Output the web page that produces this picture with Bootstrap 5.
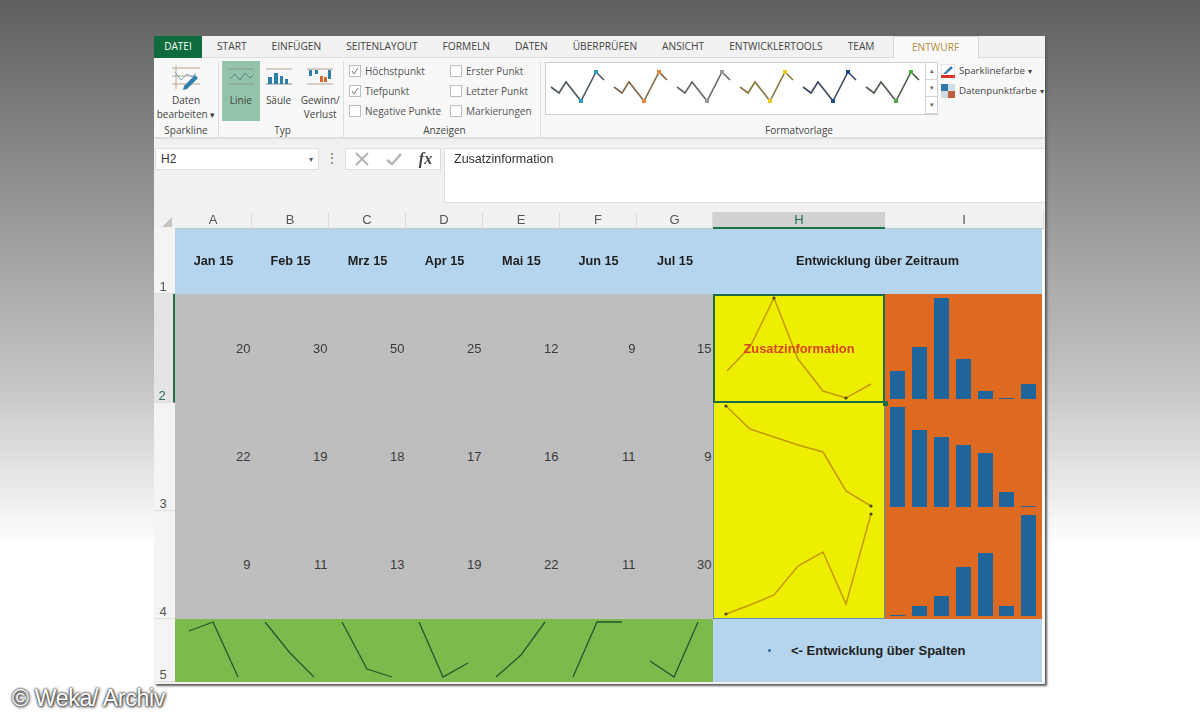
<!DOCTYPE html>
<html lang="de">
<head>
<meta charset="utf-8">
<title>Sparklines</title>
<link href="https://cdn.jsdelivr.net/npm/bootstrap@5.3.0/dist/css/bootstrap.min.css" rel="stylesheet">
<style>
html,body{height:720px;overflow:hidden}
body{background:linear-gradient(180deg,#5f5f5f 0,#8a8a8a 22%,#c2c2c2 52%,#fff 76%,#fff 100%);font-family:"Open Sans","Liberation Sans",sans-serif;padding:36px 0 0 0;color:#444}
.x-win{width:891px;height:648px;margin-left:154px;background:#f1f1f1;box-shadow:2px 2px 2px #5a5a5a;filter:blur(.4px);overflow:hidden}
.x-tabs{height:22px;background:#f1f1f1;font-size:10.2px;color:#444;gap:25px;border-bottom:1px solid #dcdcdc}
.x-file{width:48px;background:#0d6b3e;color:#fff;margin-right:-10px;height:22px;font-size:10px}
.x-tab-on{width:86px;height:23px;margin:0 0 -1px -7px;background:#fafafa;color:#b58a3c;border:1px solid #d8d8d8;border-bottom:0}
.x-ribbon{height:81px;background:#f8f8f8;border-bottom:2px solid #dfdfdf;font-size:10px;line-height:14px}
.x-grp{border-right:1px solid #dcdcdc;margin:3px 0 0;height:76px}
.x-g1{width:65px;flex:none}
.x-g2{width:125px;padding-left:3px;flex:none}
.x-g3{width:197px;padding-left:5px;flex:none}
.x-g4{flex:1;min-width:0;padding-left:4px;border-right:0}
.x-col1{width:101px}
.x-b1{width:38px}
.x-b2{width:46px}
.x-glabel{color:#444;text-align:center;margin-top:auto;height:13px;line-height:13px;white-space:nowrap}
.x-g4 .x-glabel{padding-left:8px}
.x-btn{height:60px;text-align:center;padding-top:3px;white-space:nowrap}
.x-btn svg{display:block;margin:0 auto 2px}
.x-active{background:#93c3aa}
.x-chk{gap:4px;height:20px;white-space:nowrap;color:#555}
.x-box{width:12px;height:12px;background:#fff;border:1px solid #bdbdbd;flex:none}
.x-box svg{display:block}
.x-gallery{width:393px;height:53px;background:#fff;border:1px solid #cfcfcf;margin-top:1px;flex:none}
.x-gal-item{width:63px;flex:none}
.x-scroll{width:12px;margin-left:auto;border-left:1px solid #d5d5d5;font-size:7px;color:#666}
.x-scroll span{height:17px;display:flex;align-items:center;justify-content:center;border-bottom:1px solid #d5d5d5}
.x-tools{white-space:nowrap;gap:6px;margin-left:3px;padding-top:3px;font-size:9.7px}
.x-tools small{font-size:8px;margin-left:-1px}
.x-fbar{height:74px;padding-top:9px;background:#f1f1f1}
.x-name{width:164px;height:22px;margin-left:1px;background:#fff;border:1px solid #dedede;font:12px "Liberation Sans",sans-serif;color:#333;padding:0 5px}
.x-name small{font-size:8px;color:#555}
.x-dots{width:26px;text-align:center;color:#666;font-size:12px;line-height:20px}
.x-fx{width:96px;height:22px;background:#fff;border:1px solid #dedede;color:#444}
.x-fx i{font:italic bold 16px "Liberation Serif",serif;color:#444}
.x-input{flex:1;height:55px;margin-left:3px;background:#fff;border:1px solid #dedede;border-right:0;font:12.5px "Liberation Sans",sans-serif;color:#333;padding:3px 9px}
.x-sheet{display:grid;grid-template-columns:21px repeat(6,77px) 76px 172px 157px 2px;grid-template-rows:17px 65px 109px 108px 108px 63px 2px;font-family:"Liberation Sans",sans-serif;font-size:12.7px;color:#333}
.x-ch{background:#f1f1f1;border-right:1px solid #dcdcdc;border-bottom:1px solid #b9c9d4;font-size:13px;color:#555;display:flex;align-items:center;justify-content:center}
.x-ch-on{background:#d0d2d1;border-bottom:2px solid #1e7145;color:#2d6e4f;border-right:0}
.x-span2{grid-column:span 2}
.x-corner{background:#f1f1f1;display:flex;align-items:end;justify-content:end;padding:0 3px 2px 0}
.x-rh{background:#f4f4f4;font-size:13px;color:#555;display:flex;align-items:end;justify-content:center;border-bottom:1px solid #dedede;line-height:13px;padding:0 3px 0 0}
.x-rh-on{background:#e4e4e4;border-right:2px solid #1e7145;color:#2d6e4f}
.x-hd{background:#b5d5ee;font-weight:700;display:flex;align-items:center;justify-content:center;padding-top:1px;color:#1e1e1e}
.x-num{background:#bebebe;display:flex;align-items:center;justify-content:end;padding-right:1.5px;color:#3a3a3a;font-size:13px}
.x-yel{background:#eeee00;display:grid;position:relative}
.x-yel>*{grid-area:1/1}
.x-yel svg,.x-org svg,.x-grn svg{display:block}
.x-sel{outline:2px solid #1d6b48;outline-offset:-2px}
.x-r3{box-shadow:inset 1px 0 #5c8ea8,inset -1px 0 #5c8ea8}
.x-r4{box-shadow:inset 1px 0 #5c8ea8,inset -1px 0 #5c8ea8,inset 0 -1px #5c8ea8}
.x-over{color:#d8431f;font-weight:700;display:flex;align-items:center;justify-content:center;font-size:12.8px}
.x-handle{position:absolute;right:-3px;bottom:-3px;width:5px;height:5px;background:#1d6b48;z-index:2}
.x-org{background:#dd6a20}
.x-grn{background:#7cba4d}
.x-blue2{background:#b5d5ee;font-weight:700;font-size:13px;display:flex;align-items:center;color:#1e1e1e;gap:20px;padding-left:55px}
.x-dot{width:3px;height:3px;background:#2a6aa0;border-radius:50%}
.x-bar{fill:#1f659c}
.x-sp{stroke:#c49a00;stroke-width:1.5;fill:none}
.x-gr{stroke:#1f5a2c;stroke-width:1.3;fill:none}
.x-mark{font-size:23px;margin:2px 0 0 12px;color:#fff;font-family:"Liberation Sans",sans-serif;line-height:24px;letter-spacing:-.3px;text-shadow:0 0 2px #333,0 0 3px #444,1px 1px 3px #333;white-space:nowrap}
</style>
</head>
<body>
<div class="x-win d-flex flex-column">
  <div class="x-tabs d-flex align-items-center">
    <div class="x-file d-flex align-items-center justify-content-center">DATEI</div>
    <span>START</span><span>EINFÜGEN</span><span>SEITENLAYOUT</span><span>FORMELN</span><span>DATEN</span><span>ÜBERPRÜFEN</span><span>ANSICHT</span><span>ENTWICKLERTOOLS</span><span>TEAM</span>
    <div class="x-tab-on d-flex align-items-center justify-content-center">ENTWURF</div>
  </div>
  <div class="x-ribbon d-flex">
    <div class="x-grp x-g1 d-flex flex-column">
      <div class="x-btn">
        <svg width="30" height="27" viewBox="0 0 30 27"><path d="M1 4h28M5 1v24M1 20h28M1 12h22" stroke="#b9a894" fill="none"/><path d="M4 8l6 8 6-6 5 3 4-4" stroke="#7aa3b8" fill="none"/><path d="M13 22l11-11 3 3-11 11-4 1z" fill="#2d7fa8"/></svg>
        Daten<br>bearbeiten <small>▾</small>
      </div>
      <div class="x-glabel">Sparkline</div>
    </div>
    <div class="x-grp x-g2 d-flex flex-column">
      <div class="d-flex">
        <div class="x-btn x-active x-b1">
          <svg width="28" height="27" viewBox="0 0 28 27"><path d="M1 5h26M1 20h26" stroke="#8a9a8c"/><path d="M3 15l5-5 5 6 5-7 5 5 3-3" stroke="#4c8d7c" fill="none"/></svg>
          Linie
        </div>
        <div class="x-btn x-b1">
          <svg width="28" height="27" viewBox="0 0 28 27"><path d="M1 5h26" stroke="#b4a28e"/><path d="M1 20h26" stroke="#8a8a8a"/><path d="M3 13h4v7H3zM9 9h4v11H9zM15 12h3v8h-3zM20 15h3v5h-3z" fill="#2d7ea8"/></svg>
          Säule
        </div>
        <div class="x-btn x-b2">
          <svg width="28" height="27" viewBox="0 0 28 27"><path d="M1 5h26M1 20h26" stroke="#b4a28e"/><path d="M3 6h3v6H3zM9 6h3v4H9zM22 6h3v9h-3z" fill="#2d7ea8"/><path d="M14 12h3v6h-3zM18 13h3v5h-3z" fill="#d46a2c"/></svg>
          Gewinn/<br>Verlust
        </div>
      </div>
      <div class="x-glabel">Typ</div>
    </div>
    <div class="x-grp x-g3 d-flex flex-column">
      <div class="d-flex">
        <div class="x-col1">
          <div class="x-chk d-flex align-items-center"><span class="x-box"><svg width="10" height="10" viewBox="0 0 10 10"><path d="M2 5l2 3 4-6" stroke="#777" fill="none"/></svg></span>Höchstpunkt</div>
          <div class="x-chk d-flex align-items-center"><span class="x-box"><svg width="10" height="10" viewBox="0 0 10 10"><path d="M2 5l2 3 4-6" stroke="#777" fill="none"/></svg></span>Tiefpunkt</div>
          <div class="x-chk d-flex align-items-center"><span class="x-box"></span>Negative Punkte</div>
        </div>
        <div>
          <div class="x-chk d-flex align-items-center"><span class="x-box"></span>Erster Punkt</div>
          <div class="x-chk d-flex align-items-center"><span class="x-box"></span>Letzter Punkt</div>
          <div class="x-chk d-flex align-items-center"><span class="x-box"></span>Markierungen</div>
        </div>
      </div>
      <div class="x-glabel">Anzeigen</div>
    </div>
    <div class="x-grp x-g4 d-flex flex-column">
      <div class="d-flex">
        <div class="x-gallery d-flex">
          <div class="x-gal-item"><svg width="63" height="51" viewBox="0 0 63 51"><path d="M5 24l8 6 7-11 15 19 15-29 8 8" stroke="#4c5860" stroke-width="1.6" fill="none"/><rect x="33" y="36" width="4" height="4" fill="#2f9bbd"/><rect x="48" y="7" width="4" height="4" fill="#2f9bbd"/></svg></div>
          <div class="x-gal-item"><svg width="63" height="51" viewBox="0 0 63 51"><path d="M5 24l8 6 7-11 15 19 15-29 8 8" stroke="#80664a" stroke-width="1.6" fill="none"/><rect x="33" y="36" width="4" height="4" fill="#e5873a"/><rect x="48" y="7" width="4" height="4" fill="#e5873a"/></svg></div>
          <div class="x-gal-item"><svg width="63" height="51" viewBox="0 0 63 51"><path d="M5 24l8 6 7-11 15 19 15-29 8 8" stroke="#666" stroke-width="1.6" fill="none"/><rect x="33" y="36" width="4" height="4" fill="#999"/><rect x="48" y="7" width="4" height="4" fill="#999"/></svg></div>
          <div class="x-gal-item"><svg width="63" height="51" viewBox="0 0 63 51"><path d="M5 24l8 6 7-11 15 19 15-29 8 8" stroke="#85763e" stroke-width="1.6" fill="none"/><rect x="33" y="36" width="4" height="4" fill="#ecc81e"/><rect x="48" y="7" width="4" height="4" fill="#ecc81e"/></svg></div>
          <div class="x-gal-item"><svg width="63" height="51" viewBox="0 0 63 51"><path d="M5 24l8 6 7-11 15 19 15-29 8 8" stroke="#3b4a5e" stroke-width="1.6" fill="none"/><rect x="33" y="36" width="4" height="4" fill="#20508f"/><rect x="48" y="7" width="4" height="4" fill="#20508f"/></svg></div>
          <div class="x-gal-item"><svg width="63" height="51" viewBox="0 0 63 51"><path d="M5 24l8 6 7-11 15 19 15-29 8 8" stroke="#4d5c4a" stroke-width="1.6" fill="none"/><rect x="33" y="36" width="4" height="4" fill="#4cab3f"/><rect x="48" y="7" width="4" height="4" fill="#4cab3f"/></svg></div>
          <div class="x-scroll d-flex flex-column"><span>▴</span><span>▾</span><span>▾</span></div>
        </div>
        <div class="x-tools d-flex flex-column">
          <div class="d-flex align-items-center gap-1"><svg width="14" height="14" viewBox="0 0 14 14"><rect width="14" height="14" fill="#fff" stroke="#ccc"/><path d="M2 10l8-8 2 2-7 6z" fill="#3c7ea8"/><rect y="11" width="14" height="3" fill="#d8342a"/></svg>Sparklinefarbe <small>▾</small></div>
          <div class="d-flex align-items-center gap-1"><svg width="14" height="14" viewBox="0 0 14 14"><rect width="7" height="7" fill="#2d78a8"/><rect x="7" width="7" height="7" fill="#cfdde8"/><rect y="7" width="7" height="7" fill="#cfdde8"/><rect x="7" y="7" width="7" height="7" fill="#c0603a"/></svg>Datenpunktfarbe <small>▾</small></div>
        </div>
      </div>
      <div class="x-glabel">Formatvorlage</div>
    </div>
  </div>
  <div class="x-fbar d-flex">
    <div class="x-name d-flex align-items-center justify-content-between"><span>H2</span><small>▾</small></div>
    <div class="x-dots">⋮</div>
    <div class="x-fx d-flex align-items-center justify-content-around">
      <svg width="16" height="14" viewBox="0 0 16 14"><path d="M2 1l12 12M14 1L2 13" stroke="#b5b5b5" stroke-width="2"/></svg>
      <svg width="18" height="14" viewBox="0 0 18 14"><path d="M2 8l5 4L16 2" stroke="#b5b5b5" stroke-width="2.4" fill="none"/></svg>
      <i>fx</i>
    </div>
    <div class="x-input">Zusatzinformation</div>
  </div>
  <div class="x-sheet">
    <div class="x-corner"><svg width="10" height="10" viewBox="0 0 10 10"><path d="M10 0v10H0z" fill="#c4c4c4"/></svg></div>
    <div class="x-ch">A</div><div class="x-ch">B</div><div class="x-ch">C</div><div class="x-ch">D</div><div class="x-ch">E</div><div class="x-ch">F</div><div class="x-ch">G</div>
    <div class="x-ch x-ch-on">H</div><div class="x-ch x-span2">I</div>

    <div class="x-rh">1</div>
    <div class="x-hd">Jan 15</div><div class="x-hd">Feb 15</div><div class="x-hd">Mrz 15</div><div class="x-hd">Apr 15</div><div class="x-hd">Mai 15</div><div class="x-hd">Jun 15</div><div class="x-hd">Jul 15</div>
    <div class="x-hd x-span2">Entwicklung über Zeitraum</div><div class="bg-white"></div>

    <div class="x-rh x-rh-on">2</div>
    <div class="x-num">20</div><div class="x-num">30</div><div class="x-num">50</div><div class="x-num">25</div><div class="x-num">12</div><div class="x-num">9</div><div class="x-num">15</div>
    <div class="x-yel x-sel">
      <svg width="172" height="109" viewBox="0 0 172 109"><path class="x-sp" d="M14 77L37 53 61 4 85 65 110 97 133 104 158 90"/><circle cx="61" cy="4" r="1.6" fill="#4a4a10"/><circle cx="133" cy="104" r="1.6" fill="#4a4a10"/></svg>
      <div class="x-over">Zusatzinformation</div>
      <div class="x-handle"></div>
    </div>
    <div class="x-org"><svg width="157" height="109" viewBox="0 0 157 109"><rect class="x-bar" x="5" y="77" width="15" height="28"/><rect class="x-bar" x="27" y="53" width="15" height="52"/><rect class="x-bar" x="49" y="4" width="15" height="101"/><rect class="x-bar" x="71" y="65" width="15" height="40"/><rect class="x-bar" x="93" y="97" width="15" height="8"/><rect class="x-bar" x="114" y="104" width="15" height="1"/><rect class="x-bar" x="136" y="90" width="15" height="15"/></svg></div>
    <div class="bg-white"></div>

    <div class="x-rh">3</div>
    <div class="x-num">22</div><div class="x-num">19</div><div class="x-num">18</div><div class="x-num">17</div><div class="x-num">16</div><div class="x-num">11</div><div class="x-num">9</div>
    <div class="x-yel x-r3">
      <svg width="172" height="108" viewBox="0 0 172 108"><path class="x-sp" d="M13 3L37 26 61 34 85 42 110 49 133 88 158 103"/><circle cx="13" cy="3" r="1.6" fill="#4a4a10"/><circle cx="158" cy="103" r="1.6" fill="#4a4a10"/></svg>
    </div>
    <div class="x-org"><svg width="157" height="108" viewBox="0 0 157 108"><rect class="x-bar" x="5" y="4" width="15" height="100"/><rect class="x-bar" x="27" y="27" width="15" height="77"/><rect class="x-bar" x="49" y="34" width="15" height="70"/><rect class="x-bar" x="71" y="42" width="15" height="62"/><rect class="x-bar" x="93" y="50" width="15" height="54"/><rect class="x-bar" x="114" y="89" width="15" height="15"/><rect class="x-bar" x="136" y="103" width="15" height="1"/></svg></div>
    <div class="bg-white"></div>

    <div class="x-rh">4</div>
    <div class="x-num">9</div><div class="x-num">11</div><div class="x-num">13</div><div class="x-num">19</div><div class="x-num">22</div><div class="x-num">11</div><div class="x-num">30</div>
    <div class="x-yel x-r4">
      <svg width="172" height="108" viewBox="0 0 172 108"><path class="x-sp" d="M13 103L37 94 61 84 85 55 110 41 133 93 158 3"/><circle cx="13" cy="103" r="1.6" fill="#4a4a10"/><circle cx="158" cy="3" r="1.6" fill="#4a4a10"/></svg>
    </div>
    <div class="x-org"><svg width="157" height="108" viewBox="0 0 157 108"><rect class="x-bar" x="5" y="104" width="15" height="1"/><rect class="x-bar" x="27" y="95" width="15" height="10"/><rect class="x-bar" x="49" y="85" width="15" height="20"/><rect class="x-bar" x="71" y="56" width="15" height="49"/><rect class="x-bar" x="93" y="42" width="15" height="63"/><rect class="x-bar" x="114" y="95" width="15" height="10"/><rect class="x-bar" x="136" y="4" width="15" height="101"/></svg></div>
    <div class="bg-white"></div>

    <div class="x-rh">5</div>
    <div class="x-grn"><svg width="77" height="63" viewBox="0 0 77 63"><path class="x-gr" d="M14 12L38 3 63 58"/></svg></div>
    <div class="x-grn"><svg width="77" height="63" viewBox="0 0 77 63"><path class="x-gr" d="M13 3L38 34 62 58"/></svg></div>
    <div class="x-grn"><svg width="77" height="63" viewBox="0 0 77 63"><path class="x-gr" d="M13 3L38 50 63 58"/></svg></div>
    <div class="x-grn"><svg width="77" height="63" viewBox="0 0 77 63"><path class="x-gr" d="M13 3L37 58 62 44"/></svg></div>
    <div class="x-grn"><svg width="77" height="63" viewBox="0 0 77 63"><path class="x-gr" d="M13 58L38 36 62 3"/></svg></div>
    <div class="x-grn"><svg width="77" height="63" viewBox="0 0 77 63"><path class="x-gr" d="M13 58L37 3 62 3"/></svg></div>
    <div class="x-grn"><svg width="76" height="63" viewBox="0 0 76 63"><path class="x-gr" d="M13 42L37 58 61 3"/></svg></div>
    <div class="x-blue2 x-span2"><span class="x-dot"></span><span>&lt;- Entwicklung über Spalten</span></div>
    <div class="bg-white"></div>
  </div>
</div>
<div class="x-mark">© Weka/ Archiv</div>
<script src="https://cdn.jsdelivr.net/npm/bootstrap@5.3.0/dist/js/bootstrap.bundle.min.js"></script>
</body>
</html>
